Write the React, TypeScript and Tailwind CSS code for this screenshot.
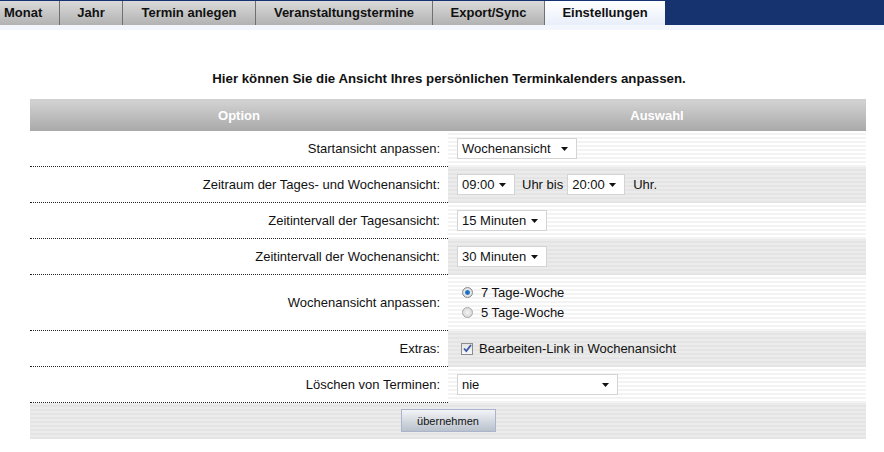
import React from "react";

const tabs = [
  { label: "Monat", w: "w-[60px]", left: true },
  { label: "Jahr", w: "w-[63px]" },
  { label: "Termin anlegen", w: "w-[133px]" },
  { label: "Veranstaltungstermine", w: "w-[177px]" },
  { label: "Export/Sync", w: "w-[112px]" },
];

const light =
  "bg-[repeating-linear-gradient(180deg,#ffffff_0px,#ffffff_2px,#f3f3f3_2px,#f3f3f3_4px)]";
const grey =
  "bg-[repeating-linear-gradient(180deg,#ebebeb_0px,#ebebeb_2px,#e4e4e4_2px,#e4e4e4_4px)]";

function Select({ value, w }: { value: string; w: string }) {
  return (
    <div
      className={`${w} h-[21px] bg-white border border-[#d4d4d4] flex items-center justify-between pl-[4px] pr-[8px] text-[13px] text-[#111]`}
    >
      <span>{value}</span>
      <svg width="7" height="4" viewBox="0 0 7 4">
        <path d="M0 0h7L3.5 4z" fill="#111" />
      </svg>
    </div>
  );
}

function Row({
  label,
  shade,
  h = "h-9",
  children,
}: {
  label: string;
  shade: string;
  h?: string;
  children: React.ReactNode;
}) {
  return (
    <div className={`flex ${h}`}>
      <div className="w-[418px] bg-white border-b border-dotted border-[#222] flex items-center justify-end pr-[8px] text-[13px] text-[#111]">
        {label}
      </div>
      <div className={`flex-1 ${shade} flex items-center pl-[9px]`}>{children}</div>
    </div>
  );
}

export default function App() {
  return (
    <div
      className="w-[884px] h-[452px] bg-white overflow-hidden"
      style={{ fontFamily: '"Liberation Sans", Arial, sans-serif' }}
    >
      {/* Tabs */}
      <div className="bg-[#17336f] pt-px flex h-[25px]">
        {tabs.map((t) => (
          <div
            key={t.label}
            className={`${t.w} h-6 bg-[linear-gradient(180deg,#dadada,#b2b2b2)] border-r border-[#707070] flex items-center ${
              t.left ? "pl-[4px]" : "justify-center"
            } text-[13px] font-bold text-[#111]`}
          >
            {t.label}
          </div>
        ))}
        <div className="w-[120px] h-6 bg-[linear-gradient(180deg,#ffffff,#e8eefa)] flex items-center justify-center text-[13px] font-bold text-[#111]">
          Einstellungen
        </div>
      </div>
      <div className="h-[5px] bg-[#f3f6fc]" />

      <p className="text-center text-[13.25px] font-bold text-[#111] mt-[39px] ml-[14px]">
        Hier können Sie die Ansicht Ihres persönlichen Terminkalenders anpassen.
      </p>

      <div className="mx-[30px] mt-[10px] w-[836px]">
        <div className="border-t-2 border-[#cfcfcf] h-[32px] bg-[linear-gradient(180deg,#d2d2d2,#a9a9a9)] flex text-[13px] font-bold text-white">
          <div className="w-[418px] flex items-center justify-center">Option</div>
          <div className="flex-1 flex items-center justify-center">Auswahl</div>
        </div>

        <Row label="Startansicht anpassen:" shade={light}>
          <Select value="Wochenansicht" w="w-[120px]" />
        </Row>
        <Row label="Zeitraum der Tages- und Wochenansicht:" shade={grey}>
          <div className="flex items-center text-[13px] text-[#111]">
            <Select value="09:00" w="w-[58px]" />
            <span className="ml-[7px] mr-[4px]">Uhr bis</span>
            <Select value="20:00" w="w-[58px]" />
            <span className="ml-[8px]">Uhr.</span>
          </div>
        </Row>
        <Row label="Zeitintervall der Tagesansicht:" shade={light}>
          <Select value="15 Minuten" w="w-[90px]" />
        </Row>
        <Row label="Zeitintervall der Wochenansicht:" shade={grey}>
          <Select value="30 Minuten" w="w-[90px]" />
        </Row>
        <Row label="Wochenansicht anpassen:" shade={light} h="h-[56px]">
          <div className="flex flex-col pl-[5px] text-[13px] leading-[20px] text-[#111]">
            <label className="flex items-center gap-[8px]">
              <span className="w-[11px] h-[11px] rounded-full border border-[#8a8a8a] bg-[radial-gradient(circle,#1d5fa8_0,#2b7fd0_2px,#eaeaea_3px,#c8c8c8_6px)]" />
              7 Tage-Woche
            </label>
            <label className="flex items-center gap-[8px]">
              <span className="w-[11px] h-[11px] rounded-full border border-[#a8a8a8] bg-[radial-gradient(circle,#f4f4f4,#cfcfcf)]" />
              5 Tage-Woche
            </label>
          </div>
        </Row>
        <Row label="Extras:" shade={grey}>
          <div className="flex items-center gap-[6px] pl-[4px] text-[13px] text-[#111]">
            <span className="w-[12px] h-[12px] border border-[#8c8c8c] bg-[linear-gradient(180deg,#e4e4e4,#f8f8f8)] flex items-center justify-center">
              <svg width="9" height="9" viewBox="0 0 9 9">
                <path d="M1 4.5l2.3 2.5L8 1" fill="none" stroke="#3a5aa8" strokeWidth="1.8" />
              </svg>
            </span>
            Bearbeiten-Link in Wochenansicht
          </div>
        </Row>
        <Row label="Löschen von Terminen:" shade={light}>
          <Select value="nie" w="w-[161px]" />
        </Row>

        <div className={`h-[36px] ${grey} flex items-center justify-center`}>
          <button className="w-[95px] h-[23px] border border-[#aab4cc] bg-[linear-gradient(180deg,#f2f4f7,#b9c1cc)] text-[11px] text-[#111]">
            übernehmen
          </button>
        </div>
      </div>
    </div>
  );
}
